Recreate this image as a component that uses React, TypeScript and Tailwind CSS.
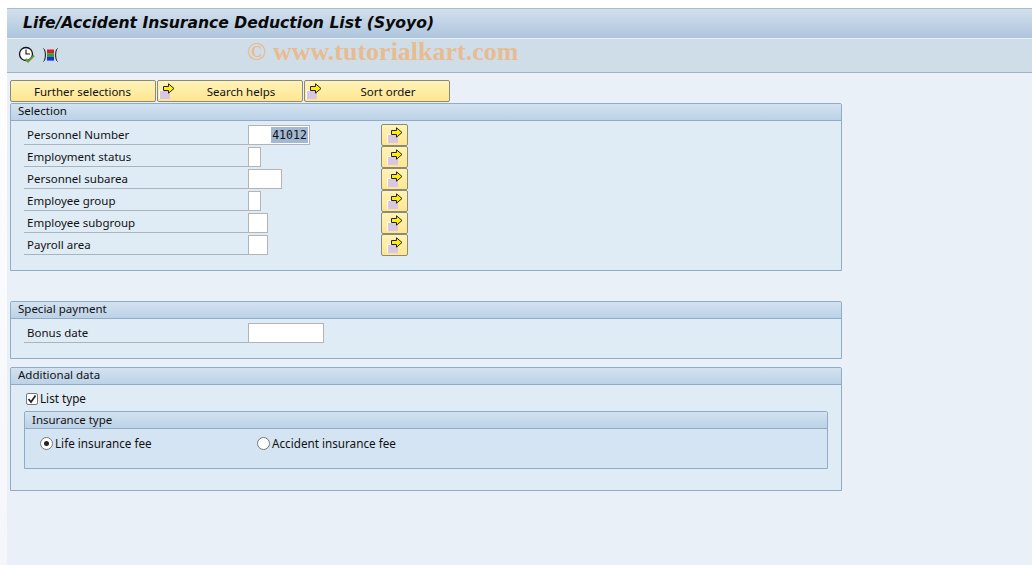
import React from "react";

function ArrowIcon() {
  return (
    <svg width="16" height="16" viewBox="0 0 16 16" className="block">
      <rect x="0" y="7" width="11" height="9" fill="#d9c6e0" />
      <path d="M0 7H11V8H1V16H0Z" fill="#ffffff" />
      <path d="M4.5 3.5H9.5V0.8L15 5.5L9.5 10.2V7.5H4.5Z" fill="#ffee00" stroke="#222222" strokeWidth="1" />
    </svg>
  );
}

function TopButton({ label, icon }: { label: string; icon?: boolean }) {
  return (
    <div className="relative w-[146px] h-[22px] flex items-center justify-center rounded-[2px] border border-[#8a8a7a] bg-gradient-to-b from-[#fff3b8] to-[#ffe68f] text-[#111] pt-[1px]">
      {icon && (
        <span className="absolute left-[1px] top-[2px]">
          <ArrowIcon />
        </span>
      )}
      <span className={icon ? "pl-[22px]" : "pr-[1px]"}>{label}</span>
    </div>
  );
}

function Group({ title, h, children }: { title: string; h: string; children: React.ReactNode }) {
  return (
    <section className={`w-[832px] ${h} border border-[#8fabc6] rounded-t-[2px] bg-[#dfebf5] flex flex-col`}>
      <div className="h-[17px] shrink-0 pl-[7px] pb-[2px] flex items-center border-b border-[#8fabc6] bg-gradient-to-b from-[#d3e2f0] to-[#bcd2e7] text-[#111]">
        {title}
      </div>
      {children}
    </section>
  );
}

function Field({ label, w, value, arrow = true }: { label: string; w: string; value?: string; arrow?: boolean }) {
  return (
    <div className="h-[22px] flex items-center pl-[13px]">
      <div className="w-[224px] h-[21px] self-start pl-[3px] pt-[2px] flex items-center border-b border-[#a9b4bd] text-[#111]">{label}</div>
      <div className={`${w} h-[20px] shrink-0 border border-[#b4b4b4] bg-white flex items-center justify-end pr-[1px]`}>
        {value && (
          <span className="h-[16px] w-[37px] bg-[#a3b8d2] text-[#111] text-center leading-[17px] text-[11.5px] [font-family:'DejaVu_Sans_Mono',monospace]">
            {value}
          </span>
        )}
      </div>
      {arrow && (
        <div className="ml-auto mr-[433px] w-[27px] h-[22px] shrink-0 rounded-[2px] border border-[#8a8a7a] bg-gradient-to-b from-[#fff3b8] to-[#ffe68f] flex items-center justify-center">
          <ArrowIcon />
        </div>
      )}
    </div>
  );
}

function ClockIcon() {
  return (
    <svg width="18" height="18" viewBox="0 0 18 18" className="block">
      <circle cx="8" cy="8" r="6.5" fill="#fff" stroke="#111" strokeWidth="1.3" />
      <path d="M8 3.5V8H12" fill="none" stroke="#111" strokeWidth="1.1" />
      <path d="M7.5 13L10 15.5L16 9.5" fill="none" stroke="#5d9a3a" strokeWidth="2" />
    </svg>
  );
}

function ColumnsIcon() {
  return (
    <svg width="16" height="16" viewBox="0 0 16 16" className="block">
      <path d="M0.5 1.5C3 3 3 13 0.5 14.5M14.5 1.5C12 3 12 13 14.5 14.5" fill="none" stroke="#111" strokeWidth="1" />
      <rect x="4" y="2.5" width="7" height="3.7" fill="#e01b24" />
      <rect x="4" y="6.2" width="7" height="3.7" fill="#26a63a" />
      <rect x="4" y="9.9" width="7" height="3.7" fill="#1c2fd6" />
    </svg>
  );
}

export default function App() {
  return (
    <div className="relative w-[1032px] h-[565px] overflow-hidden flex flex-col bg-gradient-to-b from-[#ffffff] to-[#f4f6f9] text-[11.5px] [font-family:'Noto_Sans','DejaVu_Sans',sans-serif] pt-[8px] pl-[7px]">
      <header className="h-[31px] shrink-0 border-t border-[#a9bbcf] bg-gradient-to-b from-[#d2e0ee] to-[#aec5dc] border-b border-b-[#e8f0f7] flex items-center pl-[16px]">
        <h1 className="text-[15.6px] font-bold italic text-[#0a0a0a] [font-family:'DejaVu_Sans',sans-serif]">
          Life/Accident Insurance Deduction List (Syoyo)
        </h1>
      </header>
      <div className="h-[34px] shrink-0 bg-[#cfdde8] border-b border-[#9fb3c9] flex items-center pl-[11px] pb-[2px] gap-[7px]">
        <ClockIcon />
        <ColumnsIcon />
      </div>
      <span className="absolute left-[247px] top-[32px] text-[26px] font-bold text-[#efb57c] opacity-80 [font-family:'Liberation_Serif',serif]">
        © www.tutorialkart.com
      </span>
      <main className="flex-1 bg-[#e9f0f8] pl-[3px] pt-[7px]">
        <div className="flex gap-[1px] h-[23px]">
          <TopButton label="Further selections" />
          <TopButton label="Search helps" icon />
          <TopButton label="Sort order" icon />
        </div>
        <Group title="Selection" h="h-[168px]">
          <div className="pt-[3px]">
            <Field label="Personnel Number" w="w-[62px]" value="41012" />
            <Field label="Employment status" w="w-[13px]" />
            <Field label="Personnel subarea" w="w-[34px]" />
            <Field label="Employee group" w="w-[13px]" />
            <Field label="Employee subgroup" w="w-[20px]" />
            <Field label="Payroll area" w="w-[20px]" />
          </div>
        </Group>
        <div className="h-[30px]" />
        <Group title="Special payment" h="h-[58px]">
          <div className="pt-[3px]">
            <Field label="Bonus date" w="w-[76px]" arrow={false} />
          </div>
        </Group>
        <div className="h-[8px]" />
        <Group title="Additional data" h="h-[124px]">
          <div className="pl-[15px] pt-[3px] h-[22px] flex items-center gap-[2px] text-[11.7px] text-[#111] box-content">
            <span className="w-[12px] h-[12px] border border-[#777] rounded-[2px] bg-white flex items-center justify-center">
              <svg width="10" height="10" viewBox="0 0 10 10">
                <path d="M1.5 5L4 8L8.5 1.5" fill="none" stroke="#222" strokeWidth="1.7" />
              </svg>
            </span>
            List type
          </div>
          <div className="ml-[13px] mt-[1px] w-[804px] h-[58px] border border-[#8fabc6] rounded-t-[2px] bg-[#d4e4f2]">
            <div className="h-[17px] pl-[7px] flex items-center border-b border-[#8fabc6] bg-gradient-to-b from-[#d3e2f0] to-[#bcd2e7] text-[#111]">
              Insurance type
            </div>
            <div className="flex items-center pl-[15px] pt-[6px] text-[11.7px] text-[#111]">
              <div className="w-[217px] flex items-center gap-[2px]">
                <span className="w-[13px] h-[13px] rounded-full border border-[#777] bg-white flex items-center justify-center">
                  <span className="w-[5px] h-[5px] rounded-full bg-[#222]" />
                </span>
                Life insurance fee
              </div>
              <div className="flex items-center gap-[2px]">
                <span className="w-[13px] h-[13px] rounded-full border border-[#777] bg-white" />
                Accident insurance fee
              </div>
            </div>
          </div>
        </Group>
      </main>
    </div>
  );
}
